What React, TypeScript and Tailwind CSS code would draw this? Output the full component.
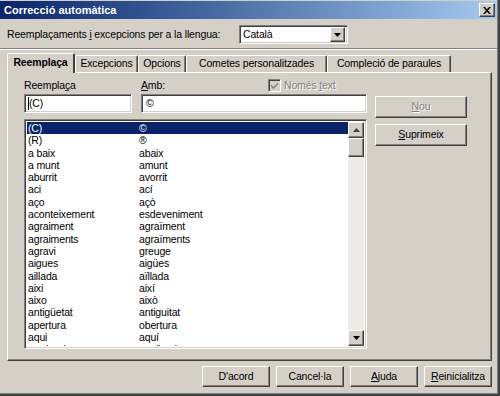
import React from 'react';

const rows: [string, string][] = [
  ['(C)', '©'],
  ['(R)', '®'],
  ['a baix', 'abaix'],
  ['a munt', 'amunt'],
  ['aburrit', 'avorrit'],
  ['aci', 'ací'],
  ['aço', 'açò'],
  ['aconteixement', 'esdeveniment'],
  ['agraiment', 'agraïment'],
  ['agraiments', 'agraïments'],
  ['agravi', 'greuge'],
  ['aigues', 'aigües'],
  ['aillada', 'aïllada'],
  ['aixi', 'així'],
  ['aixo', 'això'],
  ['antigüetat', 'antiguitat'],
  ['apertura', 'obertura'],
  ['aqui', 'aquí'],
  ['arruinada', 'arruïnada'],
];

const raised =
  'border border-t-white border-l-white border-b-[#404040] border-r-[#404040] shadow-[inset_-1px_-1px_0_#808080] bg-[#d4d0c8]';
const sunken =
  'border border-t-[#808080] border-l-[#808080] border-b-white border-r-white shadow-[inset_1px_1px_0_#404040,inset_-1px_-1px_0_#d4d0c8]';

const Arrow = ({ up }: { up?: boolean }) => (
  <svg width="7" height="4" viewBox="0 0 7 4">
    <path d={up ? 'M3.5 0 L7 4 L0 4 Z' : 'M0 0 L7 0 L3.5 4 Z'} fill={up ? '#404040' : '#000'} />
  </svg>
);

const Button = ({ children, disabled, className = '' }: { children: React.ReactNode; disabled?: boolean; className?: string }) => (
  <div
    className={`${raised} flex items-center justify-center ${
      disabled ? 'text-[#808080] [text-shadow:1px_1px_0_#fff]' : 'text-black'
    } ${className}`}
  >
    {children}
  </div>
);

export default function App() {
  return (
    <div className="w-[500px] h-[396px] bg-[#d4d0c8] overflow-hidden font-['Liberation_Sans',Arial,sans-serif] text-[10.5px] tracking-[-0.15px] text-black border-r-2 border-b-2 border-r-[#404040] border-b-[#404040]">
      <div className="w-[498px] h-[394px] border-r border-b border-r-[#808080] border-b-[#808080] pt-px">
        {/* Title bar */}
        <div className="h-[18px] w-[497px] flex items-center justify-between bg-gradient-to-r from-[#0a246a] to-[#a6caf0] pl-[4px] pr-[2px]">
          <span className="text-white font-bold text-[11px] tracking-normal">Correcció automàtica</span>
          <div className={`${raised} w-[16px] h-[14px] flex items-center justify-center`}>
            <svg width="8" height="7" viewBox="0 0 8 7">
              <path d="M0 0h2l2 2.2L6 0h2L5 3.5 8 7H6L4 4.8 2 7H0l3-3.5z" fill="#000" />
            </svg>
          </div>
        </div>

        {/* Language row */}
        <div className="flex items-center h-[19px] mt-[6px] pl-[7px]">
          <span className="w-[232px]">
            Reemplaçaments <span className="underline">i</span> excepcions per a la llengua:
          </span>
          <div className={`${sunken} bg-white w-[109px] h-[19px] flex items-center justify-between pl-[3px] pr-[2px]`}>
            <span>Català</span>
            <div className={`${raised} w-[15px] h-[15px] flex items-center justify-center`}>
              <Arrow />
            </div>
          </div>
        </div>

        {/* Separator */}
        <div className="mt-[4px] h-[2px] w-[497px] border-t border-t-[#808080] border-b border-b-white" />

        {/* Tabs */}
        <div className="flex h-[19px] mt-[3px] pl-[7px] relative z-10">
          <div className="w-[68px] h-[20px] border-t border-l border-t-white border-l-white border-r-2 border-r-[#404040] rounded-t-[2px] bg-[#d4d0c8] font-bold flex items-center justify-center pb-[2px]">
            Reemplaça
          </div>
          {[
            ['Excepcions', 'w-[63px]'],
            ['Opcions', 'w-[48px]'],
            ['Cometes personalitzades', 'w-[141px]'],
            ['Compleció de paraules', 'w-[124px]'],
          ].map(([label, w]) => (
            <div
              key={label}
              className={`${w} mt-[2px] h-[17px] border-t border-l border-t-white border-l-white border-r border-r-[#404040] shadow-[inset_-1px_0_0_#808080] rounded-t-[2px] flex items-center justify-center`}
            >
              {label}
            </div>
          ))}
        </div>

        {/* Tab panel */}
        <div className="ml-[7px] w-[485px] h-[289px] border border-t-white border-l-white border-b-[#404040] border-r-[#404040] shadow-[inset_-1px_-1px_0_#808080] flex gap-[8px] pl-[16px]">
          <div className="w-[343px] flex flex-col pt-[6px]">
            <div className="h-[13px] flex items-center">
              <span className="w-[117px]">
                Reempla<span className="underline">ç</span>a
              </span>
              <span className="w-[127px]">
                <span className="underline">A</span>mb:
              </span>
              <div className="flex items-center gap-[3px]">
                <div className={`${sunken} w-[13px] h-[13px] bg-[#d4d0c8] flex items-center justify-center`}>
                  <svg width="7" height="7" viewBox="0 0 7 7">
                    <path d="M0 2.5 L2.5 5 L7 0.5 L7 2.5 L2.5 7 L0 4.5 Z" fill="#808080" />
                  </svg>
                </div>
                <span className="text-[#808080] [text-shadow:1px_1px_0_#fff]">
                  Només <span className="underline">t</span>ext
                </span>
              </div>
            </div>
            <div className="flex gap-[9px] mt-[2px]">
              <div className={`${sunken} bg-white w-[108px] h-[19px] flex items-center pl-[3px]`}>
                <span className="w-px h-[13px] bg-black" />
                <span>(C)</span>
              </div>
              <div className={`${sunken} bg-white w-[226px] h-[19px] flex items-center pl-[4px]`}>©</div>
            </div>
            <div className={`${sunken} bg-white mt-[6px] h-[230px] flex p-[2px] overflow-hidden`}>
              <div className="flex-1 overflow-hidden">
                {rows.map(([a, b], i) => (
                  <div
                    key={a}
                    className={`h-[12.3px] leading-[12.3px] flex whitespace-nowrap ${
                      i === 0 ? 'bg-[#0a246a] text-white' : ''
                    }`}
                  >
                    <span className="w-[112px] pl-[1px]">{a}</span>
                    <span>{b}</span>
                  </div>
                ))}
              </div>
              {/* Scrollbar */}
              <div className="w-[16px] h-full bg-[#ecebe7] flex flex-col">
                <div className={`${raised} h-[16px] flex items-center justify-center`}>
                  <Arrow up />
                </div>
                <div className={`${raised} h-[19px]`} />
                <div className="flex-1" />
                <div className={`${raised} h-[16px] flex items-center justify-center`}>
                  <Arrow />
                </div>
              </div>
            </div>
          </div>
          <div className="flex flex-col pt-[23px] gap-[6px]">
            <Button disabled className="w-[92px] h-[22px]">
              <span className="underline">N</span>ou
            </Button>
            <Button className="w-[92px] h-[22px]">
              <span className="underline">S</span>uprimeix
            </Button>
          </div>
        </div>

        {/* Bottom buttons */}
        <div className="flex justify-end gap-[6px] mt-[5px] w-[492px]">
          <Button className="w-[68px] h-[21px]">D'acord</Button>
          <Button className="w-[68px] h-[21px]">Cancel·la</Button>
          <Button className="w-[68px] h-[21px]">
            <span className="underline">A</span>juda
          </Button>
          <Button className="w-[68px] h-[21px]">
            <span className="underline">R</span>einicialitza
          </Button>
        </div>
      </div>
    </div>
  );
}
